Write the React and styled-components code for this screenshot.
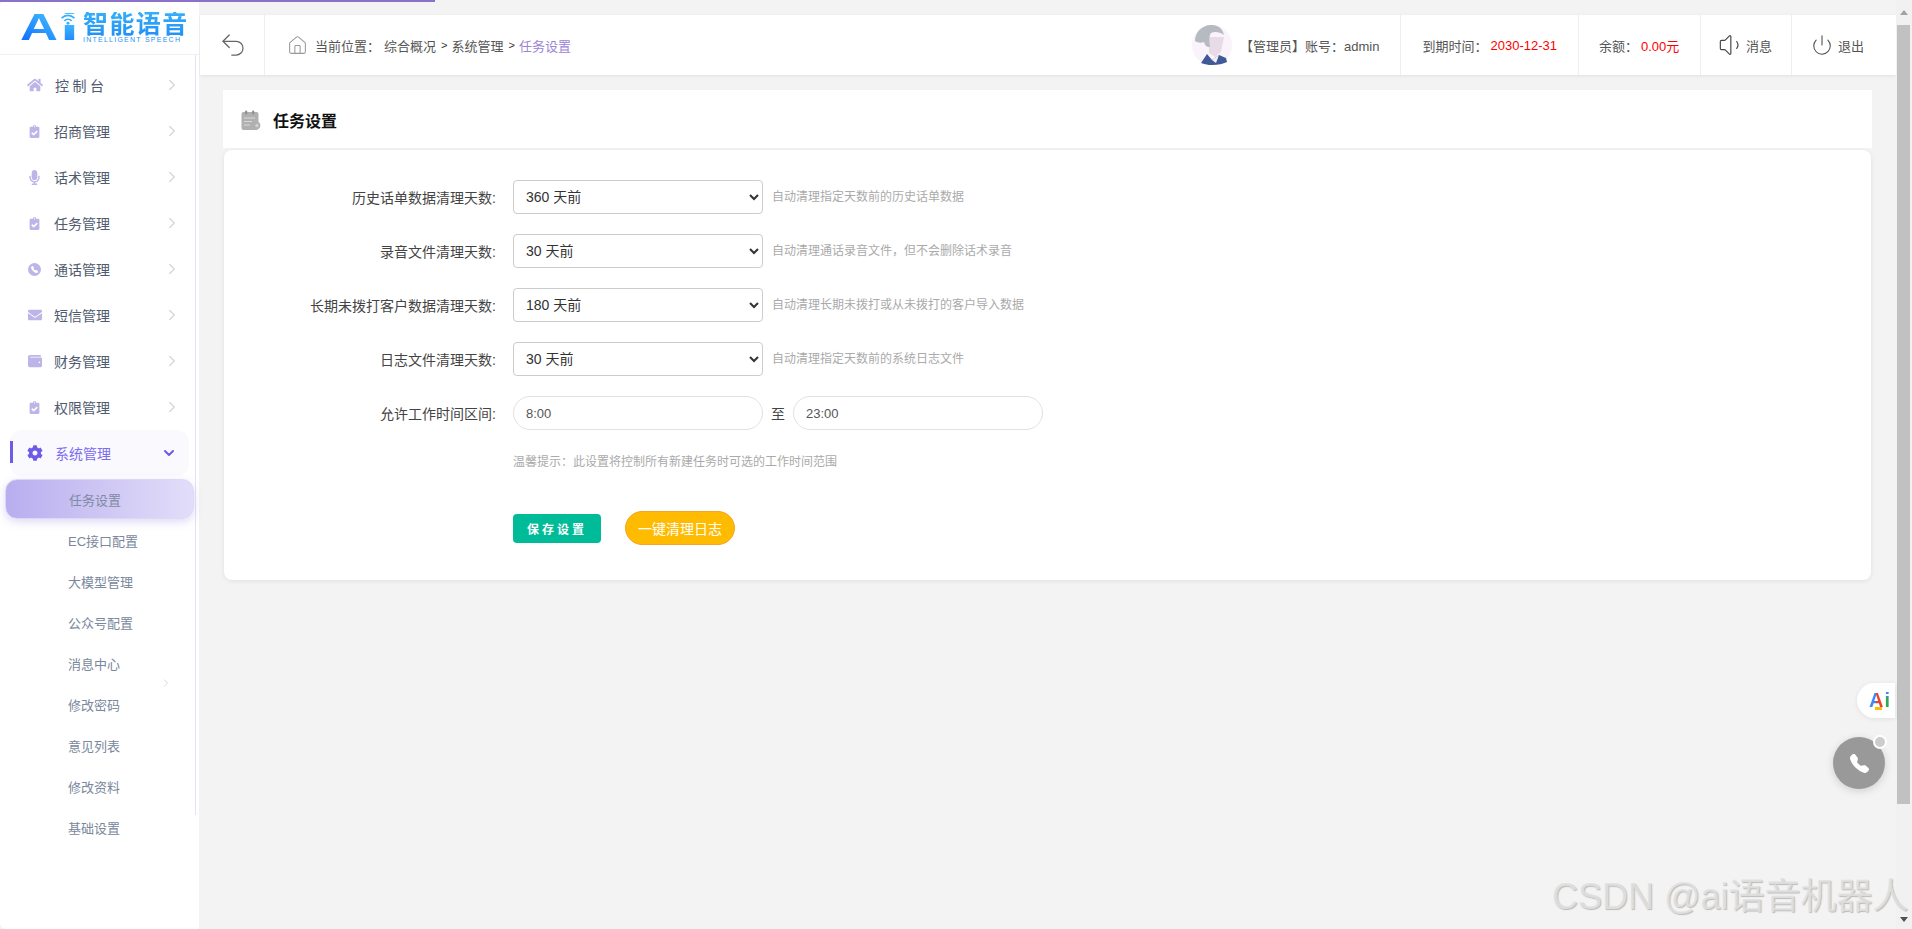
import styled, { createGlobalStyle } from 'styled-components';
import {
  ChevronDown,
  ChevronRight,
  House,
  Power,
  Undo2,
  Volume1,
} from 'lucide-react';
import {
  FaClipboardCheck,
  FaCog,
  FaEnvelope,
  FaHome,
  FaMicrophone,
  FaWallet,
} from 'react-icons/fa';
import { BsTelephoneFill } from 'react-icons/bs';

const GlobalStyle = createGlobalStyle`
  html, body {
    margin: 0;
    height: 100%;
    overflow: hidden;
    background: #f3f3f3;
    font-family: "Liberation Sans", "Noto Sans CJK SC", sans-serif;
  }
  * { box-sizing: border-box; }
`;

const Page = styled.div`
  position: relative;
  display: flex;
  height: 929px;
  overflow: hidden;
  background: #f3f3f3;
`;

const ProgressBar = styled.div`
  position: absolute;
  left: 0;
  top: 0;
  width: 435px;
  height: 2px;
  background: #8a72c9;
  z-index: 5;
`;

/* sidebar */
const Sidebar = styled.aside`
  position: relative;
  flex: 0 0 199px;
  background: #fff;
  border-radius: 6px 0 0 6px;
`;

const SideLine = styled.div`
  position: absolute;
  left: 195px;
  top: 55px;
  width: 1px;
  height: 760px;
  background: #e3e3f5;
`;

const Logo = styled.div`
  position: relative;
  display: flex;
  height: 55px;
  padding: 12px 0 0 20px;
  border-bottom: 1px solid #f0f0f0;
`;

const LogoMark = styled.div`
  position: relative;
  flex: 0 0 63px;
  height: 36px;
`;

const LogoA = styled.span`
  position: absolute;
  left: 0;
  top: -5px;
  font-size: 36px;
  line-height: 42px;
  font-weight: 700;
  transform: scaleX(1.46);
  transform-origin: left center;
  background: linear-gradient(45deg, #1473ff 20%, #3fb9fb 80%);
  -webkit-background-clip: text;
  background-clip: text;
  color: transparent;
`;

const LogoI = styled.span`
  position: absolute;
  left: 40px;
  top: -5px;
  font-size: 36px;
  line-height: 42px;
  font-weight: 700;
  transform: scaleX(1.9);
  transform-origin: left center;
  background: linear-gradient(180deg, #47c3fb 30%, #1473ff 100%);
  -webkit-background-clip: text;
  background-clip: text;
  color: transparent;
`;

const WifiMark = styled.svg`
  position: absolute;
  left: 40px;
  top: 2px;
  width: 16px;
  height: 11px;
  background: #fff;
`;

const LogoWords = styled.div`
  display: flex;
  flex-direction: column;
  width: 106px;
`;

const LogoName = styled.div`
  font-size: 25px;
  line-height: 24px;
  font-weight: 700;
  letter-spacing: 1.4px;
  white-space: nowrap;
  background: linear-gradient(180deg, #35b0fb, #2290f5);
  -webkit-background-clip: text;
  background-clip: text;
  color: transparent;
`;

const LogoSub = styled.div`
  margin-top: 0;
  font-size: 7px;
  line-height: 8px;
  letter-spacing: 1.25px;
  white-space: nowrap;
  color: #1f93f2;
`;

const Nav = styled.nav`
  padding-top: 7px;
`;

const NavItem = styled.div`
  position: relative;
  display: flex;
  align-items: center;
  height: 46px;
  margin-left: 10px;
  width: 179px;
  padding: ${(p) => (p.$active ? '0 12px 0 17px' : '0 8px 0 17px')};
  border-radius: 12px;
  font-size: 14px;
  color: ${(p) => (p.$active ? '#7c6cf0' : '#4f5a6e')};
  background: ${(p) => (p.$active ? '#faf9fe' : 'transparent')};
  letter-spacing: ${(p) => (p.$spaced ? '3.5px' : '0')};

  &::before {
    content: '';
    display: ${(p) => (p.$active ? 'block' : 'none')};
    position: absolute;
    left: 0;
    top: 11px;
    width: 3px;
    height: 22px;
    background: #6c5ce7;
  }
`;

const NavIcon = styled.span`
  display: flex;
  justify-content: center;
  align-items: center;
  flex: 0 0 15px;
  margin-right: 12px;
  font-size: 15px;
  color: ${(p) => (p.$active ? '#6c5ce7' : '#bdb4e8')};
`;

const PhoneDisc = styled.span`
  display: flex;
  align-items: center;
  justify-content: center;
  width: 13px;
  height: 13px;
  border-radius: 50%;
  background: #bdb4e8;
  color: #fff;
  font-size: 7px;
`;

const NavArrow = styled.span`
  display: flex;
  margin-left: auto;
  color: ${(p) => (p.$active ? '#6c5ce7' : '#d5d8e0')};
`;

const SubList = styled.div`
  position: relative;
  margin-top: 3px;
`;

const SubItem = styled.div`
  display: flex;
  align-items: center;
  height: ${(p) => (p.$active ? '40px' : '41px')};
  margin: ${(p) => (p.$active ? '1px 5px 1px' : '0 5px')};
  padding-left: 63px;
  font-size: 13px;
  color: ${(p) => (p.$active ? '#7f8aa3' : '#7a879c')};
  border-radius: 12px;
  ${(p) =>
    p.$active &&
    `
    background: linear-gradient(90deg, #b8aeef, #e2def9);
    border: 1px solid #dcd8f6;
    box-shadow: 0 3px 8px rgba(150, 135, 230, 0.3);
  `}
`;

const SubArrow = styled.span`
  position: absolute;
  left: 160px;
  top: 198px;
  display: flex;
  color: #d5d8e0;
`;

/* main column */
const Main = styled.main`
  flex: 1;
  min-width: 0;
  padding: 15px 0 0 1px;
`;

const Header = styled.header`
  display: flex;
  align-items: stretch;
  height: 60px;
  background: #fff;
  box-shadow: 0 1px 3px rgba(0, 0, 0, 0.08);
  font-size: 13px;
  color: #555;
`;

const BackCell = styled.div`
  display: flex;
  align-items: center;
  justify-content: center;
  flex: 0 0 65px;
  padding-left: 2px;
  border-right: 1px solid #eee;
  color: #666;
`;

const Breadcrumb = styled.div`
  display: flex;
  align-items: center;
  flex: 1;
  padding-left: 22px;
  color: #999;
`;

const Crumb = styled.span`
  margin-left: ${(p) => p.$gap || '0'};
  color: ${(p) => (p.$current ? '#9b84d6' : '#555')};
`;

const CrumbSep = styled.span`
  margin: 0 4px 0 5px;
  font-size: 11px;
  color: #333;
`;

const HeaderCell = styled.div`
  display: flex;
  align-items: center;
  flex: ${(p) => (p.$width ? `0 0 ${p.$width}` : '0 0 auto')};
  padding: ${(p) => p.$pad || '0 21px'};
  border-left: ${(p) => (p.$plain ? 'none' : '1px solid #eee')};
  white-space: nowrap;
`;

const Avatar = styled.svg`
  width: 40px;
  height: 40px;
  margin-right: 8px;
`;

const RedValue = styled.span`
  margin-left: 3px;
  color: #f00;
`;

const HeaderIcon = styled.span`
  display: flex;
  margin-right: ${(p) => p.$gap || '5px'};
  color: #444;
`;

const Content = styled.div`
  padding: 15px 24px 0 23px;
`;

const TitleCard = styled.div`
  display: flex;
  align-items: center;
  height: 58px;
  padding: 2px 0 0 18px;
  background: #fff;
`;

const TitleIcon = styled.svg`
  width: 20px;
  height: 20px;
  margin-right: 12px;
`;

const Title = styled.h1`
  margin: 0;
  font-size: 16px;
  font-weight: 700;
  color: #111;
`;

const FormCard = styled.div`
  margin: 2px 1px 0;
  padding: 30px 0 35px;
  background: #fff;
  border-radius: 8px;
  box-shadow: 0 1px 5px rgba(0, 0, 0, 0.08);
`;

const FormRow = styled.div`
  display: flex;
  align-items: center;
  height: 34px;
  margin-bottom: 20px;
`;

const Label = styled.label`
  flex: 0 0 272px;
  margin: 0 17px 1px 0;
  text-align: right;
  font-size: 14px;
  color: #444;
`;

const Select = styled.select`
  width: 250px;
  height: 34px;
  padding: 0 8px;
  font-family: inherit;
  font-size: 14px;
  color: #333;
  background: #fff;
  border: 1px solid #ccc;
  border-radius: 4px;
`;

const Hint = styled.span`
  margin: 0 0 3px 9px;
  font-size: 12px;
  color: #aaa;
`;

const TimeInput = styled.input`
  width: 250px;
  height: 34px;
  padding: 0 12px;
  font-family: inherit;
  font-size: 13px;
  color: #555;
  background: #fff;
  border: 1px solid #e2e2e2;
  border-radius: 17px;
`;

const To = styled.span`
  margin: 0 8px 0 8px;
  font-size: 14px;
  color: #444;
`;

const Tip = styled.p`
  margin: 25px 0 0 289px;
  font-size: 12px;
  line-height: 14px;
  color: #aaa;
`;

const Actions = styled.div`
  display: flex;
  align-items: center;
  gap: 24px;
  margin: 42px 0 0 289px;
`;

const SaveButton = styled.button`
  width: 88px;
  height: 29px;
  padding: 0;
  border: none;
  border-radius: 4px;
  background: #00bb98;
  color: #fff;
  font-family: inherit;
  font-size: 12px;
  font-weight: 700;
  letter-spacing: 3px;
`;

const ClearButton = styled.button`
  width: 110px;
  height: 34px;
  padding: 0;
  border: 1px solid #f5a623;
  border-radius: 17px;
  background: #ffbb00;
  color: #fff;
  font-family: inherit;
  font-size: 14px;
`;

/* browser scrollbar */
const ScrollBar = styled.div`
  display: flex;
  flex-direction: column;
  flex: 0 0 16px;
  background: #f1f1f1;
`;

const ScrollArrow = styled.div`
  display: flex;
  justify-content: center;
  align-items: ${(p) => (p.$down ? 'flex-end' : 'center')};
  height: ${(p) => (p.$down ? '16px' : '25px')};
  flex: ${(p) => (p.$down ? '1' : '0 0 auto')};
  padding-bottom: ${(p) => (p.$down ? '7px' : '0')};

  &::after {
    content: '';
    border-left: 4px solid transparent;
    border-right: 4px solid transparent;
    ${(p) =>
      p.$down
        ? 'border-top: 5px solid #505050;'
        : 'border-bottom: 5px solid #a3a3a3;'}
  }
`;

const ScrollThumb = styled.div`
  width: 13px;
  height: 779px;
  margin-left: 1px;
  background: #c1c1c1;
`;

/* floating */
const AiChip = styled.div`
  position: absolute;
  right: 17px;
  top: 683px;
  display: flex;
  align-items: center;
  width: 38px;
  height: 35px;
  padding-left: 12px;
  background: #fff;
  border-radius: 18px 0 0 18px;
  box-shadow: 0 1px 5px rgba(0, 0, 0, 0.08);
  font-size: 20px;
  font-weight: 700;
`;

const ChipA = styled.span`
  position: relative;
  background: linear-gradient(90deg, #4285f4 50%, #ea4335 50%);
  -webkit-background-clip: text;
  background-clip: text;
  color: transparent;

  &::after {
    content: '';
    position: absolute;
    left: 6px;
    right: 1px;
    bottom: 2px;
    height: 3px;
    background: #fbbc05;
  }
`;

const ChipI = styled.span`
  margin-left: 1px;
  background: linear-gradient(180deg, #4285f4 35%, #34a853 35%);
  -webkit-background-clip: text;
  background-clip: text;
  color: transparent;
`;

const PhoneButton = styled.div`
  position: absolute;
  left: 1833px;
  top: 737px;
  display: flex;
  align-items: center;
  justify-content: center;
  width: 52px;
  height: 52px;
  border-radius: 50%;
  background: #999;
  color: #fff;
  font-size: 19px;
  box-shadow: 0 2px 8px rgba(0, 0, 0, 0.15);
`;

const PhoneDot = styled.span`
  position: absolute;
  right: -2px;
  top: -2px;
  width: 14px;
  height: 14px;
  border-radius: 50%;
  background: #ccc;
  border: 2px solid #fff;
`;

const Watermark = styled.div`
  position: absolute;
  left: 1552px;
  top: 876px;
  font-size: 36px;
  line-height: 42px;
  white-space: nowrap;
  color: rgba(226, 226, 226, 0.85);
  text-shadow: 1px 1px 1px rgba(150, 150, 150, 0.6);
  pointer-events: none;
`;

const menu = [
  { name: '控制台', icon: <FaHome size={16} />, spaced: true },
  { name: '招商管理', icon: <FaClipboardCheck size={13} /> },
  { name: '话术管理', icon: <FaMicrophone size={15} /> },
  { name: '任务管理', icon: <FaClipboardCheck size={13} /> },
  {
    name: '通话管理',
    icon: (
      <PhoneDisc>
        <BsTelephoneFill />
      </PhoneDisc>
    ),
  },
  { name: '短信管理', icon: <FaEnvelope size={14} /> },
  { name: '财务管理', icon: <FaWallet size={14} /> },
  { name: '权限管理', icon: <FaClipboardCheck size={13} /> },
];

const subMenu = [
  'EC接口配置',
  '大模型管理',
  '公众号配置',
  '消息中心',
  '修改密码',
  '意见列表',
  '修改资料',
  '基础设置',
];

const rows = [
  {
    label: '历史话单数据清理天数:',
    value: '360',
    options: ['30', '90', '180', '360'],
    hint: '自动清理指定天数前的历史话单数据',
  },
  {
    label: '录音文件清理天数:',
    value: '30',
    options: ['30', '90', '180', '360'],
    hint: '自动清理通话录音文件，但不会删除话术录音',
  },
  {
    label: '长期未拨打客户数据清理天数:',
    value: '180',
    options: ['30', '90', '180', '360'],
    hint: '自动清理长期未拨打或从未拨打的客户导入数据',
  },
  {
    label: '日志文件清理天数:',
    value: '30',
    options: ['30', '90', '180', '360'],
    hint: '自动清理指定天数前的系统日志文件',
  },
];

const App = () => {
  return (
    <Page>
      <GlobalStyle />
      <ProgressBar />

      <Sidebar>
        <SideLine />
        <Logo>
          <LogoMark>
            <LogoA>A</LogoA>
            <LogoI>i</LogoI>
            <WifiMark viewBox="0 0 17 12" fill="none" stroke="#35b0fb">
              <path d="M1.5 4.5 C5.5 0.5 11.5 0.5 15.5 4.5" strokeWidth="1.8" />
              <path d="M4.5 7.5 C6.8 5.2 10.2 5.2 12.5 7.5" strokeWidth="1.8" />
              <circle cx="8.5" cy="10" r="1.6" fill="#35b0fb" stroke="none" />
            </WifiMark>
          </LogoMark>
          <LogoWords>
            <LogoName>智能语音</LogoName>
            <LogoSub>INTELLIGENT SPEECH</LogoSub>
          </LogoWords>
        </Logo>
        <Nav>
          {menu.map((item) => (
            <NavItem key={item.name} $spaced={item.spaced}>
              <NavIcon>{item.icon}</NavIcon>
              {item.name}
              <NavArrow>
                <ChevronRight size={18} strokeWidth={2} />
              </NavArrow>
            </NavItem>
          ))}
          <NavItem $active>
            <NavIcon $active>
              <FaCog size={16} />
            </NavIcon>
            系统管理
            <NavArrow $active>
              <ChevronDown size={16} strokeWidth={3} />
            </NavArrow>
          </NavItem>
          <SubList>
            <SubItem $active>任务设置</SubItem>
            {subMenu.map((name) => (
              <SubItem key={name}>{name}</SubItem>
            ))}
            <SubArrow>
              <ChevronRight size={12} strokeWidth={2} />
            </SubArrow>
          </SubList>
        </Nav>
      </Sidebar>

      <Main>
        <Header>
          <BackCell>
            <Undo2 size={30} strokeWidth={1} />
          </BackCell>
          <Breadcrumb>
            <House size={21} strokeWidth={1.2} />
            <Crumb $gap="7px">当前位置：</Crumb>
            <Crumb $gap="4px">综合概况</Crumb>
            <CrumbSep>&gt;</CrumbSep>
            <Crumb>系统管理</Crumb>
            <CrumbSep>&gt;</CrumbSep>
            <Crumb $current>任务设置</Crumb>
          </Breadcrumb>
          <HeaderCell $plain>
            <Avatar viewBox="0 0 40 40">
              <circle cx="20" cy="20" r="20" fill="#fbf3fb" />
              <path d="M17 12h15l-3 15-6 5-6-4z" fill="#e6dbe6" />
              <path
                d="M3 16C3 6 12-1 21 0c7 1 10 5 11 10-4-3-9-4-13-2-2 3-2 8-1 14-4 0-5-2-6-5-3 1-6 1-9-1z"
                fill="#b6bbc1"
              />
              <path
                d="M9 38l6-9 5 6 7-5 7 3 1 4c-4 2-9 3-15 3-3 0-4 0-11-2z"
                fill="#3f5a96"
              />
              <path d="M20 35l7-5-3 8z" fill="#f5eef5" />
            </Avatar>
            【管理员】账号：admin
          </HeaderCell>
          <HeaderCell $width="177px">
            到期时间：<RedValue>2030-12-31</RedValue>
          </HeaderCell>
          <HeaderCell $width="122px" $pad="0 0 0 20px">
            余额：<RedValue>0.00元</RedValue>
          </HeaderCell>
          <HeaderCell $width="91px" $pad="0 0 0 17px">
            <HeaderIcon $gap="0">
              <Volume1 size={28} strokeWidth={1} />
            </HeaderIcon>
            消息
          </HeaderCell>
          <HeaderCell $width="105px" $pad="0 0 0 19px">
            <HeaderIcon>
              <Power size={22} strokeWidth={1.1} />
            </HeaderIcon>
            退出
          </HeaderCell>
        </Header>

        <Content>
          <TitleCard>
            <TitleIcon viewBox="0 0 20 20">
              <rect x="0.5" y="2" width="17" height="18" rx="2" fill="#b0b0b0" />
              <rect x="4" y="0.5" width="2.2" height="4" rx="1" fill="#8f8f8f" />
              <rect x="11" y="0.5" width="2.2" height="4" rx="1" fill="#8f8f8f" />
              <path
                d="M3 8h11M3 11.5h8M3 15h6"
                stroke="#d9d9d9"
                strokeWidth="1"
              />
              <circle
                cx="16"
                cy="15.5"
                r="2.6"
                fill="#d0d0d0"
                stroke="#b0b0b0"
                strokeWidth="1.6"
              />
            </TitleIcon>
            <Title>任务设置</Title>
          </TitleCard>

          <FormCard>
            {rows.map((row) => (
              <FormRow key={row.label}>
                <Label>{row.label}</Label>
                <Select defaultValue={row.value}>
                  {row.options.map((o) => (
                    <option key={o} value={o}>
                      {o} 天前
                    </option>
                  ))}
                </Select>
                <Hint>{row.hint}</Hint>
              </FormRow>
            ))}
            <FormRow>
              <Label>允许工作时间区间:</Label>
              <TimeInput defaultValue="8:00" />
              <To>至</To>
              <TimeInput defaultValue="23:00" />
            </FormRow>
            <Tip>温馨提示：此设置将控制所有新建任务时可选的工作时间范围</Tip>
            <Actions>
              <SaveButton>保存设置</SaveButton>
              <ClearButton>一键清理日志</ClearButton>
            </Actions>
          </FormCard>
        </Content>
      </Main>

      <ScrollBar>
        <ScrollArrow />
        <ScrollThumb />
        <ScrollArrow $down />
      </ScrollBar>

      <AiChip>
        <ChipA>A</ChipA>
        <ChipI>i</ChipI>
      </AiChip>
      <PhoneButton>
        <BsTelephoneFill />
        <PhoneDot />
      </PhoneButton>
      <Watermark>CSDN @ai语音机器人</Watermark>
    </Page>
  );
};

export default App;
